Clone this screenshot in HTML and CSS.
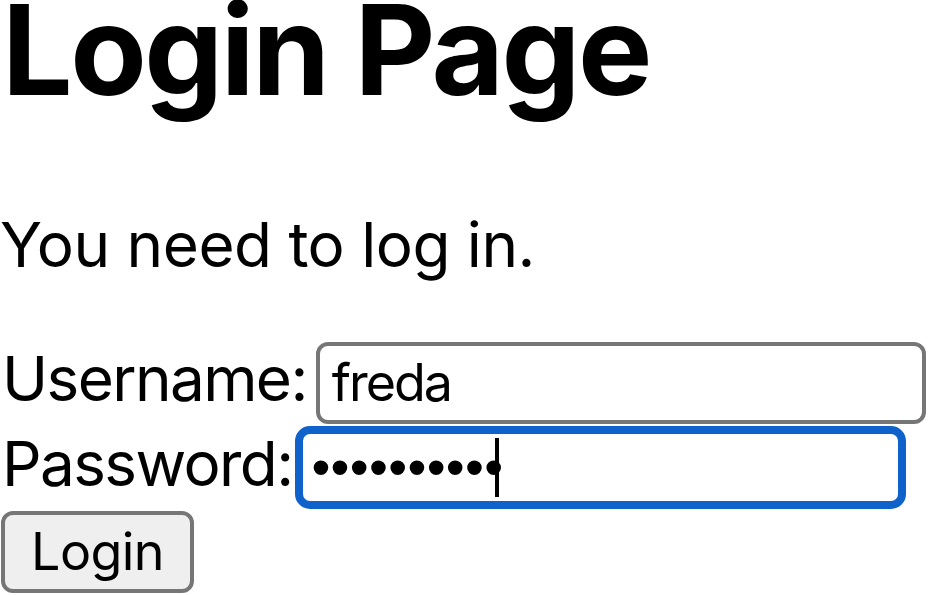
FILE: index.html
```html
<!DOCTYPE html>
<html lang="en">
<head>
<meta charset="utf-8">
<title>Login Page</title>
<link rel="stylesheet" href="styles.css">
</head>
<body>
<h1 class="title">Login Page</h1>
<p class="lead">You need to log in.</p>
<form class="login-form">
  <div class="row">
    <label class="label" for="username">Username:</label>
    <input class="field" id="username" type="text" value="freda">
  </div>
  <div class="row">
    <label class="label label--tight" for="password">Password:</label>
    <span class="field-wrap">
      <input class="field field--focused" id="password" type="password" value="secretpass">
      <span class="caret"></span>
    </span>
  </div>
  <div class="row">
    <button class="btn" type="submit">Login</button>
  </div>
</form>
</body>
</html>
```
FILE: styles.css
```css
html, body {
  margin: 0;
  padding: 0;
  background: #ffffff;
}
body {
  font-family: Inter, "Noto Sans", sans-serif;
  color: #000;
}
.title {
  margin: 0;
  padding-left: 2px;
  font-size: 125px;
  font-weight: 700;
  line-height: 99px;
  letter-spacing: -2.5px;
}
.lead {
  margin: 108px 0 0 0;
  font-size: 62px;
  line-height: 75px;
  letter-spacing: -0.5px;
}
.login-form {
  margin-top: 59px;
  display: flex;
  flex-direction: column;
  gap: 2px;
}
.row {
  display: flex;
  align-items: baseline;
}
.label {
  font-size: 62px;
  padding-left: 2px;
  margin-right: 9px;
  letter-spacing: -1.6px;
}
.label--tight {
  margin-right: 3px;
}
.field {
  box-sizing: border-box;
  width: 610px;
  height: 82px;
  border: 4px solid #767676;
  border-radius: 12px;
  padding: 0 12px;
  font-family: Inter, "Noto Sans", sans-serif;
  font-size: 52px;
  letter-spacing: -2px;
  color: #000;
  background: #fff;
  outline: none;
  caret-color: transparent;
}
.field-wrap {
  position: relative;
  display: inline-flex;
}
.field--focused {
  width: 611px;
  height: 83px;
  border: 8px solid #1062cb;
  border-radius: 15px;
  padding: 0 8px;
  font-family: "Liberation Sans", Arial, sans-serif;
  font-size: 54px;
  letter-spacing: 0.3px;
}
.caret {
  position: absolute;
  left: 200px;
  top: 12px;
  width: 4px;
  height: 59px;
  background: #000;
}
.btn {
  box-sizing: border-box;
  margin-left: 1px;
  width: 193px;
  height: 82px;
  border: 4px solid #767676;
  border-radius: 12px;
  background: #efefef;
  font-family: Inter, "Noto Sans", sans-serif;
  font-size: 52px;
  letter-spacing: -0.6px;
  color: #000;
  padding: 0;
}
```
